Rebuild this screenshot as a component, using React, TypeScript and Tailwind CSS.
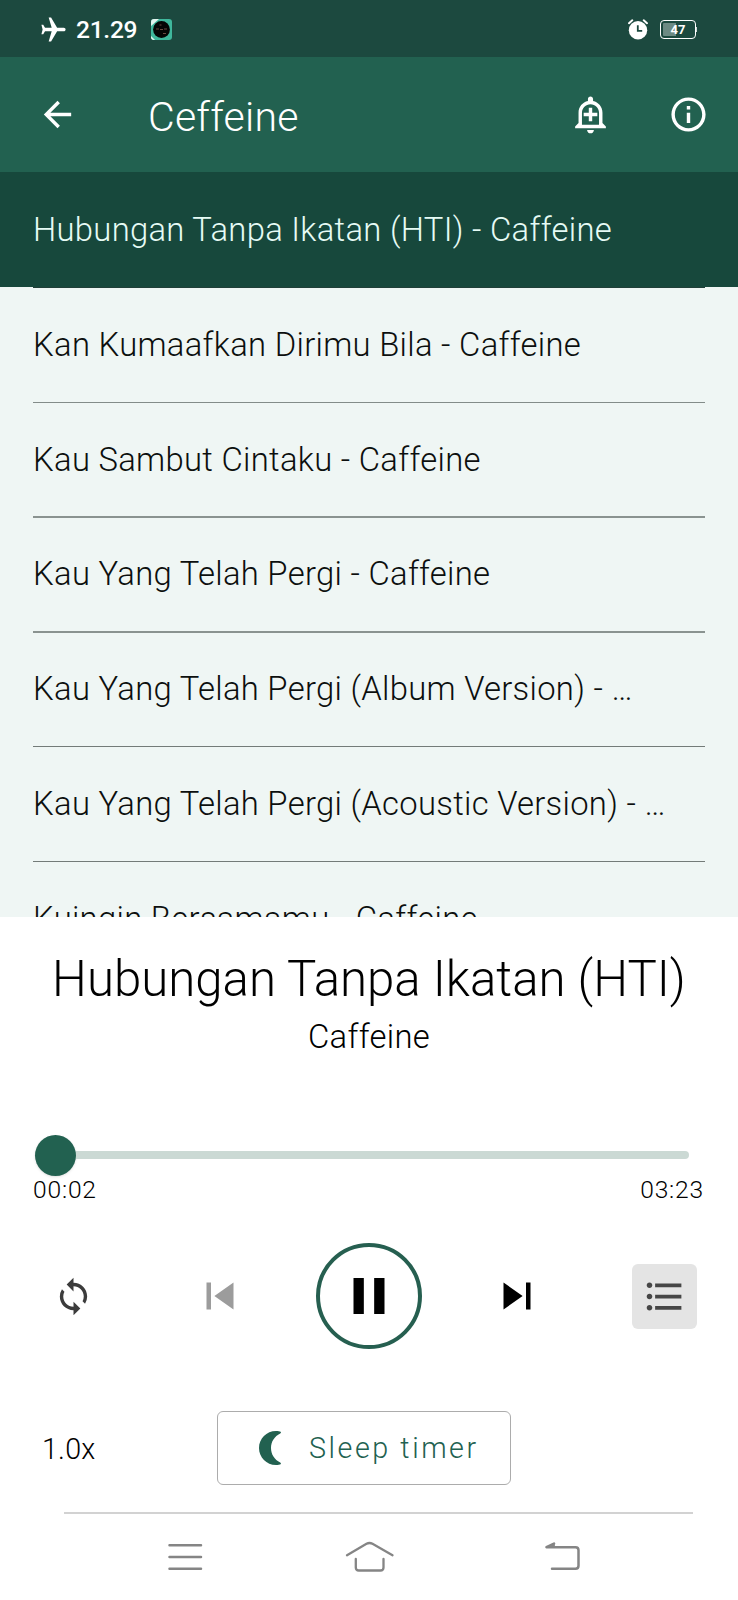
import { useState } from "react";
import {
  MdAirplanemodeActive,
  MdArrowBack,
  MdFormatListBulleted,
  MdInfoOutline,
  MdLoop,
  MdOutlineAddAlert,
  MdPause,
  MdPlayArrow,
  MdSkipNext,
  MdSkipPrevious,
} from "react-icons/md";

type Song = {
  id: number;
  label: string;
};

const songs: Song[] = [
  { id: 1, label: "Hubungan Tanpa Ikatan (HTI) - Caffeine" },
  { id: 2, label: "Kan Kumaafkan Dirimu Bila - Caffeine" },
  { id: 3, label: "Kau Sambut Cintaku - Caffeine" },
  { id: 4, label: "Kau Yang Telah Pergi - Caffeine" },
  { id: 5, label: "Kau Yang Telah Pergi (Album Version) - …" },
  { id: 6, label: "Kau Yang Telah Pergi (Acoustic Version) - …" },
  { id: 7, label: "Kuingin Bersamamu - Caffeine" },
];

// line above each row
const dividers = [
  "-mb-px h-px",
  "-mb-px mx-[33px] h-px bg-[#203f38]",
  "-mb-[1.5px] mx-[33px] h-[1.5px] bg-[#838c89]",
  "-mb-[2px] mx-[33px] h-[2px] bg-[#8a9390]",
  "-mb-[2px] mx-[33px] h-[2px] bg-[#8a9390]",
  "-mb-px mx-[33px] h-px bg-[#737b78]",
  "-mb-px mx-[33px] h-px bg-[#737b78]",
];

const StatusBar = () => (
  <div className="flex h-[57px] shrink-0 items-center bg-[#1c493f] pl-[39px] pr-[41px] pt-[2px] text-white">
    <MdAirplanemodeActive className="size-[29px] rotate-90" />
    <span className="ml-[8px] pt-px text-[24.6px] font-medium leading-none tracking-[-0.3px]">21.29</span>
    {/* app notification */}
    <svg className="ml-[14px]" width="21" height="21" viewBox="0 0 21 21">
      <rect width="21" height="21" rx="3" fill="#3fb79c" />
      <path d="M0 7V3a3 3 0 0 1 3-3h5zM0 17l4 4H3a3 3 0 0 1-3-3z" fill="#e4f5f0" />
      <circle cx="10.5" cy="10.5" r="8.4" fill="#050505" />
      <path d="M5 10h3m1 .5h3m1-.5h3M8.500 6h2M12 14.500h3" stroke="#6b4a42" strokeWidth="1" />
    </svg>
    {/* alarm */}
    <svg className="ml-auto" width="20" height="21" viewBox="0 0 20 21">
      <circle cx="10" cy="11.300" r="9.200" fill="#fff" />
      <path d="M1 4.200 4.300 1.300M19 4.200 15.700 1.300" stroke="#fff" strokeWidth="2" strokeLinecap="round" />
      <path d="M9.800 6.300v5.500h4.400" stroke="#1c493f" strokeWidth="1.800" fill="none" />
    </svg>
    <div className="ml-3 flex items-center">
      <div className="flex h-[19px] w-[36px] items-center justify-center rounded-[4px] border-[1.5px] border-white bg-linear-to-r from-[#6c8a83] from-45% to-transparent to-45% bg-clip-content p-[2px] text-[13px] font-bold leading-none">
        47
      </div>
      <div className="h-[5px] w-px bg-white/80" />
    </div>
  </div>
);

const App = () => {
  const [activeId, setActiveId] = useState(1);
  const [playing, setPlaying] = useState(true);

  return (
    <div className="flex h-[1600px] w-[738px] flex-col overflow-hidden bg-white font-[Roboto,sans-serif] font-light text-black">
      <StatusBar />

      {/* Header */}
      <header className="flex h-[115px] shrink-0 items-center bg-[#226150] px-[29px] pl-[37px] text-white">
        <MdArrowBack className="size-[41px]" />
        <h1 className="ml-[70px] pt-[5px] text-[41px] leading-none tracking-[0.25px]">Ceffeine</h1>
        <MdOutlineAddAlert className="ml-auto size-[41px]" />
        <MdInfoOutline className="ml-[57px] size-[41px]" />
      </header>

      {/* Song list */}
      <ul className="h-[744.5px] shrink-0 overflow-hidden bg-[#eff6f4]">
        {songs.map((song, i) => (
          <li
            key={song.id}
            onClick={() => setActiveId(song.id)}
            className={
              song.id === activeId
                ? "h-[114.8px] bg-[#17483c] text-[#e6fbf5]"
                : "h-[114.8px] text-[#0c0f0e]"
            }>
            <div className={dividers[i]} />
            <p className="truncate px-[33px] text-[32.8px] leading-[116.6px] tracking-[0.3px]">{song.label}</p>
          </li>
        ))}
      </ul>

      {/* Player */}
      <section className="flex flex-1 flex-col bg-white">
        <h2 className="mt-[33px] text-center text-[49.2px] leading-[58px]">Hubungan Tanpa Ikatan (HTI)</h2>
        <p className="mt-[10px] text-center text-[32.8px] leading-[39px] tracking-[0.3px]">Caffeine</p>

        <div className="mt-[78px] flex h-[41px] items-center pl-[35px] pr-[49px]">
          <div className="size-[41px] shrink-0 rounded-full bg-[#226150] shadow-sm" />
          <div className="h-2 flex-1 rounded-r-full bg-[#cbd9d4]" />
        </div>
        <div className="flex justify-between pl-[33px] pr-[34px] text-[24.6px] leading-[27px] tracking-[0.033em]">
          <span>00:02</span>
          <span>03:23</span>
        </div>

        <div className="mt-[40px] flex h-[107px] items-center pl-[53px] pr-[41px]">
          <MdLoop className="size-[41px] text-[#3c3c3c]" />
          <MdSkipPrevious className="ml-[99px] size-[54px] text-[#9c9c9c]" />
          <button
            onClick={() => setPlaying(!playing)}
            className="ml-[69px] flex size-[106px] items-center justify-center rounded-full border-4 border-[#265f50]">
            {playing ? <MdPause className="size-[62px]" /> : <MdPlayArrow className="size-[62px]" />}
          </button>
          <MdSkipNext className="ml-[68px] size-[54px]" />
          <button className="ml-auto flex size-[65px] items-center justify-center rounded-md bg-[#e4e4e4]">
            <MdFormatListBulleted className="size-[45px] text-[#464646]" />
          </button>
        </div>

        <div className="mt-[61px] flex h-[74px] items-center">
          <span className="w-[217px] pl-[42px] pt-[4px] text-[28.7px] tracking-[0.2px]">1.0x</span>
          <button className="flex h-[74px] w-[294px] items-center rounded-md border border-[#acacac] pl-[41px] text-[28.7px] tracking-[0.089em] text-[#226150]">
            <svg width="22" height="34" viewBox="0 0 22 34" fill="currentColor">
              <path d="M17 0c2 0 4 .3 4.600.7.600.5.400 1.300-.400 1.800C15.500 5.500 12 10.500 12 17s3.500 11.500 9.200 14.500c.8.500 1 1.300.4 1.800C21 33.700 19 34 17 34 7.500 34 0 26.400 0 17S7.500 0 17 0z" />
            </svg>
            <span className="ml-[28px] pt-[3px]">Sleep timer</span>
          </button>
        </div>
        <div className="ml-16 mr-[45px] mt-[27px] h-[2px] bg-[#d2d2d2]" />
      </section>

      {/* Android navigation */}
      <nav className="flex h-[86px] shrink-0 items-center bg-white pl-[168px] text-[#858585]">
        <svg width="35" height="30" viewBox="0 0 35 30" fill="none" stroke="currentColor" strokeWidth="2.500" strokeLinecap="round">
          <path d="M1.500 3.200h31.500M1.500 15h31.500M1.500 26.700h31.500" />
        </svg>
        <svg className="ml-[142px]" width="50" height="32" viewBox="0 0 50 32" fill="none" stroke="currentColor" strokeWidth="2.300" strokeLinecap="round" strokeLinejoin="round">
          <path d="M2 14.200 21.500 2.800Q24.500 1.200 27.500 2.800L47.500 14.200M10.800 18v8.500q0 3 3 3h21.700q3 0 3-3V18" />
        </svg>
        <svg className="ml-[149px]" width="38" height="30" viewBox="0 0 38 30" fill="none" stroke="currentColor" strokeWidth="2.500" strokeLinecap="round" strokeLinejoin="round">
          <path d="M10 1.500 2.500 5.200H31.500q3 0 3 3v15.500q0 3-3 3H8" />
          <path d="M10 1.500 2.500 5.200H10z" fill="currentColor" strokeWidth="1" />
        </svg>
      </nav>
    </div>
  );
};

export default App;
